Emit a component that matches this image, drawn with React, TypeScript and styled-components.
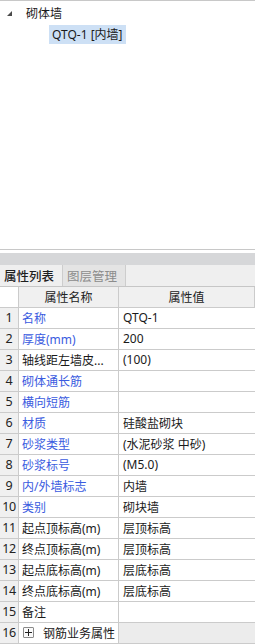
import React from "react";
import styled, { createGlobalStyle } from "styled-components";

type PropRow = {
  name: string;
  value?: string;
  blue?: boolean;
  group?: boolean;
};

const rows: PropRow[] = [
  { name: "名称", value: "QTQ-1", blue: true },
  { name: "厚度(mm)", value: "200", blue: true },
  { name: "轴线距左墙皮...", value: "(100)" },
  { name: "砌体通长筋", blue: true },
  { name: "横向短筋", blue: true },
  { name: "材质", value: "硅酸盐砌块", blue: true },
  { name: "砂浆类型", value: "(水泥砂浆 中砂)", blue: true },
  { name: "砂浆标号", value: "(M5.0)", blue: true },
  { name: "内/外墙标志", value: "内墙", blue: true },
  { name: "类别", value: "砌块墙", blue: true },
  { name: "起点顶标高(m)", value: "层顶标高" },
  { name: "终点顶标高(m)", value: "层顶标高" },
  { name: "起点底标高(m)", value: "层底标高" },
  { name: "终点底标高(m)", value: "层底标高" },
  { name: "备注" },
  { name: "钢筋业务属性", group: true },
];

const GlobalStyle = createGlobalStyle`
  html, body {
    margin: 0;
    padding: 0;
    background: #ffffff;
  }
  body {
    font-family: "Noto Sans", "Noto Sans CJK SC", sans-serif;
    font-size: 12px;
    color: #1a1a1a;
  }
`;

const Page = styled.div`
  width: 255px;
  height: 644px;
  display: flex;
  flex-direction: column;
  overflow: hidden;
`;

const TreePanel = styled.div`
  height: 247px;
  border-top: 1px solid #c8c8c8;
  border-bottom: 1px solid #c8c8c8;
  padding-top: 4px;
  box-sizing: content-box;
`;

const TreeNode = styled.div<{ $indent: number; $tall?: boolean }>`
  display: flex;
  align-items: center;
  height: ${(p) => (p.$tall ? 20 : 18)}px;
  margin-top: ${(p) => (p.$tall ? 1 : 0)}px;
  padding-left: ${(p) => p.$indent}px;
`;

const Arrow = styled.span`
  width: 16px;
  display: flex;
  align-items: center;
`;

const NodeLabel = styled.span<{ $selected?: boolean }>`
  line-height: ${(p) => (p.$selected ? 19 : 18)}px;
  padding: 0 3px;
  background: ${(p) => (p.$selected ? "#cde0f5" : "transparent")};
`;

const Splitter = styled.div`
  height: 4px;
  background: #ffffff;
`;

const Caption = styled.div`
  height: 12px;
  background: #d6d7d9;
`;

const TabBar = styled.div`
  height: 21px;
  display: flex;
  background: #efefef;
  border-bottom: 1px solid #c6c6c6;
`;

const Tab = styled.div<{ $active?: boolean }>`
  display: flex;
  align-items: center;
  padding: 0 6px 0 4px;
  width: 52px;
  font-size: 12.5px;
  color: ${(p) => (p.$active ? "#1e1e1e" : "#8c8c8c")};
  font-weight: ${(p) => (p.$active ? 500 : 400)};
  background: ${(p) => (p.$active ? "#efefef" : "#e4e4e4")};
  border-right: 1px solid #cdcdcd;
`;

const Grid = styled.div`
  display: grid;
  grid-template-columns: 19px 100px 1fr;
  grid-auto-rows: 21px;
`;

const HeadCell = styled.div<{ $blank?: boolean }>`
  display: flex;
  align-items: center;
  justify-content: center;
  background: ${(p) => (p.$blank ? "#ffffff" : "#f0f0f0")};
  border-right: 1px solid #cbcbcb;
  border-bottom: 1px solid #cbcbcb;
  color: #222;
  &:last-child {
    border-right: none;
  }
`;

const NumCell = styled.div`
  display: flex;
  align-items: center;
  justify-content: center;
  background: #f0f0f0;
  border-right: 1px solid #cbcbcb;
  border-bottom: 1px solid #cbcbcb;
  font-size: 12.5px;
  color: #222;
  letter-spacing: -0.3px;
`;

const NameCell = styled.div<{ $blue?: boolean }>`
  display: flex;
  align-items: center;
  padding-left: 3px;
  gap: 9px;
  background: #ffffff;
  border-right: 1px solid #cbcbcb;
  border-bottom: 1px solid #cbcbcb;
  color: ${(p) => (p.$blue ? "#3a5be0" : "#1a1a1a")};
  white-space: nowrap;
  overflow: hidden;
`;

const ValueCell = styled.div<{ $group?: boolean }>`
  display: flex;
  align-items: center;
  padding-left: 4px;
  background: ${(p) => (p.$group ? "#ececec" : "#ffffff")};
  border-bottom: 1px solid #cbcbcb;
  color: #1a1a1a;
  white-space: nowrap;
`;

const PlusBox = styled.span`
  width: 9px;
  height: 9px;
  border: 1px solid #8a8a8a;
  border-radius: 1px;
  background: #fafafa;
  display: flex;
  align-items: center;
  justify-content: center;
  margin-left: 1px;
`;

const App: React.FC = () => {
  return (
    <Page>
      <GlobalStyle />
      <TreePanel>
        <TreeNode $indent={7}>
          <Arrow>
            <svg width="6" height="6" viewBox="0 0 6 6">
              <polygon points="5,0 5,5 0,5" fill="#4a4a4a" />
            </svg>
          </Arrow>
          <NodeLabel>砌体墙</NodeLabel>
        </TreeNode>
        <TreeNode $indent={49} $tall>
          <NodeLabel $selected>QTQ-1 [内墙]</NodeLabel>
        </TreeNode>
      </TreePanel>
      <Splitter />
      <Caption />
      <TabBar>
        <Tab $active>属性列表</Tab>
        <Tab>图层管理</Tab>
      </TabBar>
      <Grid>
        <HeadCell $blank />
        <HeadCell>属性名称</HeadCell>
        <HeadCell>属性值</HeadCell>
        {rows.map((row, i) => (
          <React.Fragment key={row.name}>
            <NumCell>{i + 1}</NumCell>
            <NameCell $blue={row.blue}>
              {row.group && (
                <PlusBox>
                  <svg width="7" height="7" viewBox="0 0 7 7">
                    <path d="M0 3.5H7M3.5 0V7" stroke="#222" strokeWidth="1" />
                  </svg>
                </PlusBox>
              )}
              {row.name}
            </NameCell>
            <ValueCell $group={row.group}>{row.value}</ValueCell>
          </React.Fragment>
        ))}
      </Grid>
    </Page>
  );
};

export default App;
